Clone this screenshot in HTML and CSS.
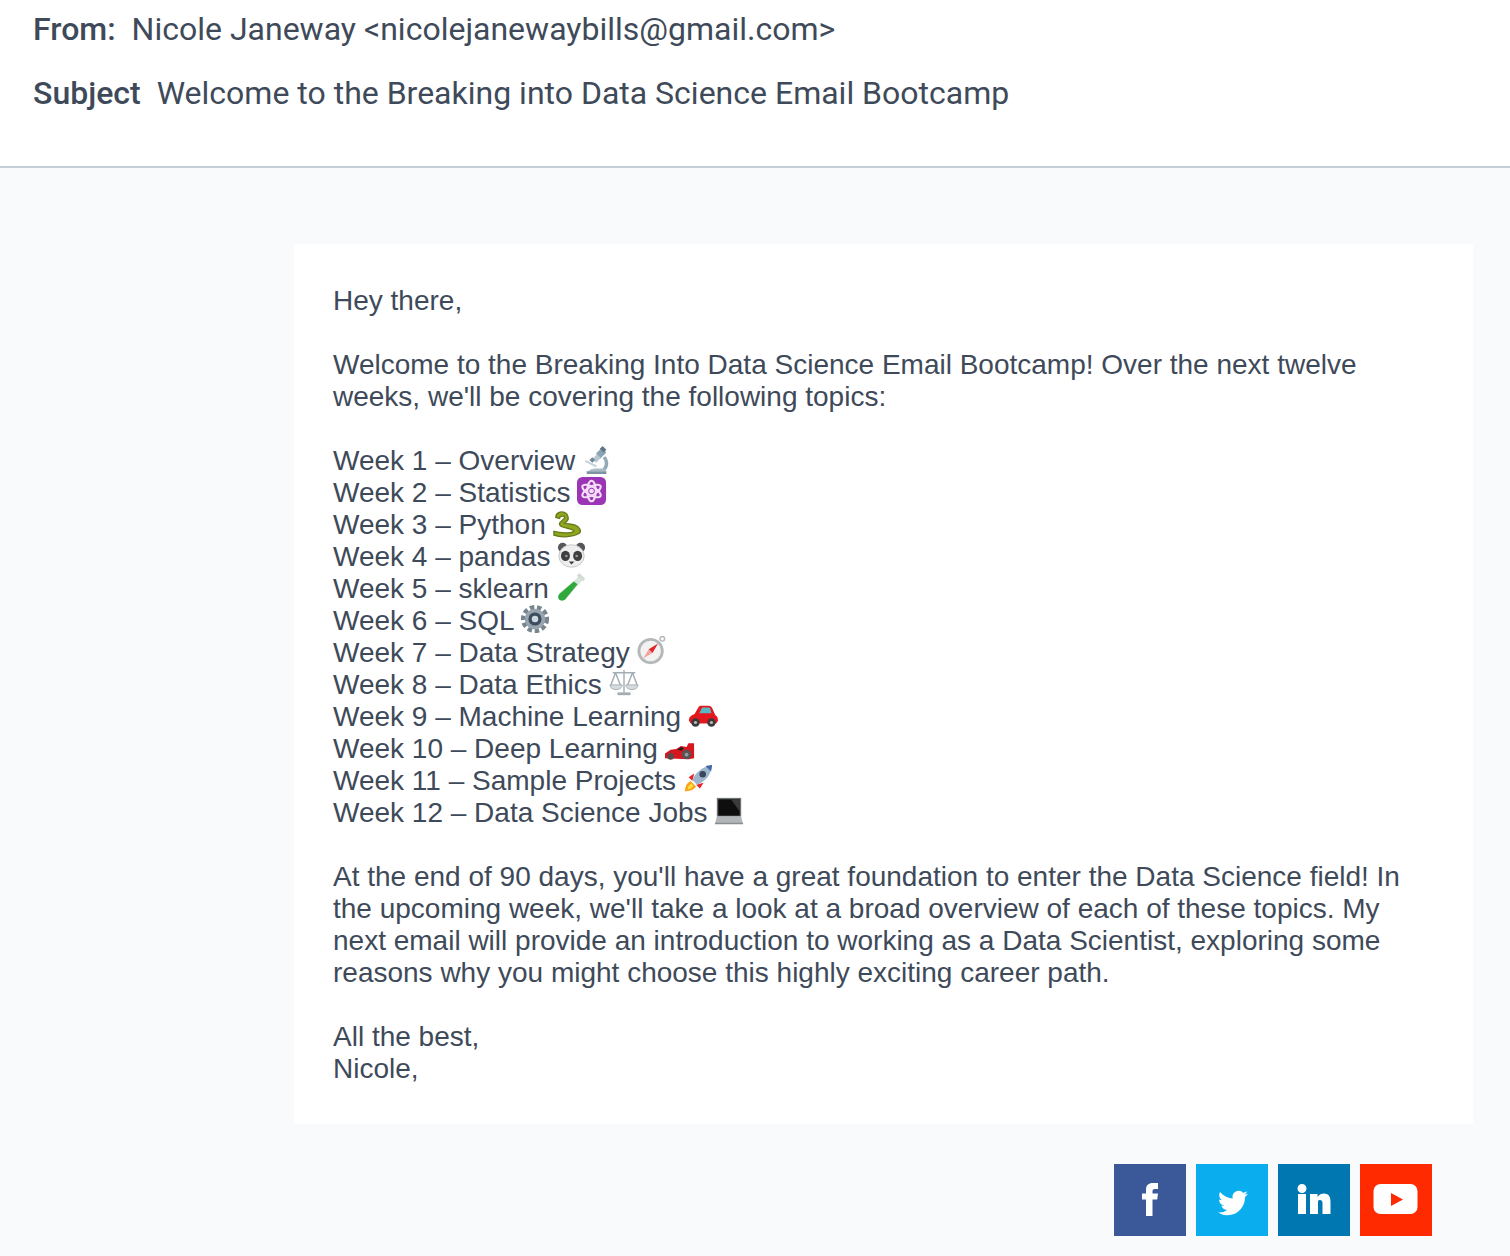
FILE: index.html
```html
<!DOCTYPE html>
<html lang="en">
<head>
<meta charset="utf-8">
<title>Welcome to the Breaking into Data Science Email Bootcamp</title>
<link rel="stylesheet" href="styles.css">
</head>
<body>
<header class="head">
  <p class="head-row"><b class="head-label">From:</b><span>Nicole Janeway &lt;nicolejanewaybills@gmail.com&gt;</span></p>
  <p class="head-row"><b class="head-label">Subject</b><span>Welcome to the Breaking into Data Science Email Bootcamp</span></p>
</header>
<main class="stage">
  <article class="card">
    <p class="para">Hey there,</p>
    <p class="para">Welcome to the Breaking Into Data Science Email Bootcamp! Over the next twelve weeks, we'll be covering the following topics:</p>
    <ul class="weeks">
      <li>Week 1 – Overview <svg class="emo" viewBox="0 -2 32 32"><path d="M22 24c3-3 3-8 0-11l3-2c4 4 4 12 0 15z" fill="#93aab8"/><path d="M5 30h21v-3H5z" fill="#7f929f"/><path d="M7 27c1-2 5-3 8-3h9l2 3z" fill="#a9bcc6"/><path d="M15 8l6-6 5 5-7 7z" fill="#8ba3b2"/><path d="M19 3l3-3 4 4-3 3z" fill="#5f7888"/><path d="M11 14l5-5 4 4-5 5z" fill="#b7c8d1"/><path d="M4 15l12 6-1 2-12-6z" fill="#c7d3d9"/><path d="M8 15l3-3 3 3-3 3z" fill="#6f8795"/></svg></li>
      <li>Week 2 – Statistics <svg class="emo" viewBox="0 0 32 32"><rect x="0" y="1" width="31" height="30" rx="6" fill="#9a35b5"/><g fill="none" stroke="#f6dff9" stroke-width="2.200"><ellipse cx="15.500" cy="16" rx="4.500" ry="11"/><ellipse cx="15.500" cy="16" rx="4.500" ry="11" transform="rotate(60 15.500 16)"/><ellipse cx="15.500" cy="16" rx="4.500" ry="11" transform="rotate(-60 15.500 16)"/></g><circle cx="15.500" cy="16" r="2.500" fill="#f6dff9"/></svg></li>
      <li>Week 3 – Python <svg class="emo" viewBox="0 -1 32 32"><path d="M1 28c8 3 21 2 27-2 3-3 0-7-5-9-4-1-9-1-11-2 3-1 5-4 4-7-1-4-6-6-10-4-2 1-3 3-3 5l4 1c0-2 3-3 5-2 2 2-3 4-5 7-1 4 5 5 10 6 3 1 6 2 5 3-3 2-14 2-21 0z" fill="#8fa61f" stroke="#66791a" stroke-width="1.400"/></svg></li>
      <li>Week 4 – pandas <svg class="emo" viewBox="0 -1 32 32"><circle cx="6" cy="7" r="5" fill="#55555a"/><circle cx="25" cy="7" r="5" fill="#55555a"/><ellipse cx="15.500" cy="16" rx="13.500" ry="12" fill="#eeeeee" stroke="#c4c4c4"/><ellipse cx="9" cy="16" rx="4.800" ry="5.500" fill="#3f3f42"/><ellipse cx="22" cy="16" rx="4.800" ry="5.500" fill="#3f3f42"/><circle cx="10" cy="16" r="1.400" fill="#999"/><circle cx="21" cy="16" r="1.400" fill="#999"/><path d="M12.500 22h6l-3 3z" fill="#3f3f42"/></svg></li>
      <li>Week 5 – sklearn <svg class="emo" viewBox="0 0 32 32"><path d="M24 5l4 4L10 29c-2 2-5 2-7 0-1-2-1-4 1-6z" fill="#d7e6da"/><path d="M19 10l4 3L10 29c-2 2-5 2-7 0-1-2-1-4 1-6z" fill="#2fa83c"/><path d="M22 4l7 6 2-3-6-6z" fill="#d3dbd7"/></svg></li>
      <li>Week 6 – SQL <svg class="emo" viewBox="0 0 32 32"><circle cx="16" cy="16" r="12" fill="none" stroke="#77858f" stroke-width="6" stroke-dasharray="4.500 2.780"/><circle cx="16" cy="16" r="11" fill="#98a5ae"/><circle cx="16" cy="16" r="7" fill="#3d4d60"/><circle cx="16" cy="16" r="3.500" fill="#cfd8de"/></svg></li>
      <li>Week 7 – Data Strategy <svg class="emo" viewBox="0 0 32 32"><circle cx="14.500" cy="16" r="14" fill="#b5b8ba"/><circle cx="14.500" cy="16" r="11" fill="#f2f2f2"/><circle cx="27" cy="3" r="2.500" fill="none" stroke="#b5b8ba" stroke-width="1.500"/><path d="M22.500 8l-6 10-4-4z" fill="#e0262b"/><path d="M6.500 24l6-10 4 4z" fill="#f3a6a0"/></svg></li>
      <li>Week 8 – Data Ethics <svg class="emo" viewBox="0 0 32 32"><g fill="none" stroke="#a3adb3" stroke-width="1.500"><path d="M4 5h24M16 2v24M7 5L2 18M7 5l5 13M25 5l-5 13M25 5l5 13"/></g><path d="M1 18h13c0 3-3 5-6.500 5S1 21 1 18zM18 18h13c0 3-3 5-6.500 5S18 21 18 18z" fill="#d6dbdf" stroke="#a3adb3"/><path d="M9 26h14v3H9z" fill="#a3adb3"/></svg></li>
      <li>Week 9 – Machine Learning <svg class="emo" viewBox="0 0 32 32"><path d="M1 22c0-4 3-6 6-7l4-7c1-2 2-2 4-2h7c2 0 3 1 4 3l3 7c2 1 3 3 3 6l-2 3H3z" fill="#e3171d"/><path d="M12 14l3-6h7c1 0 2 1 2 2l1 4z" fill="#58b7c2"/><circle cx="8" cy="24" r="4.500" fill="#3b3b3b"/><circle cx="25" cy="24" r="4.500" fill="#3b3b3b"/><circle cx="8" cy="24" r="1.700" fill="#bbb"/><circle cx="25" cy="24" r="1.700" fill="#bbb"/></svg></li>
      <li>Week 10 – Deep Learning <svg class="emo" viewBox="0 0 32 32"><path d="M0 28v-5l6-4 6-1 5-3 6 1 2-4h6v16l-6 1z" fill="#d6171f"/><circle cx="6" cy="26" r="3.500" fill="#5a4a4a"/><circle cx="23" cy="24" r="5" fill="#555"/><circle cx="23" cy="24" r="2" fill="#999"/><path d="M13 19l4-3 3 1-2 3z" fill="#222"/></svg></li>
      <li>Week 11 – Sample Projects <svg class="emo" viewBox="0 0 32 32"><path d="M2 29c0-5 2-9 6-11l6 6c-3 4-7 5-12 5z" fill="#f9a51a"/><path d="M5 27c0-3 2-5 4-6l2 2c-1 2-3 4-6 4z" fill="#fde047"/><path d="M6 14l6-4-2 8zM18 26l4-6-8 2z" fill="#e5262a"/><path d="M10 17C14 8 21 3 31 1c-1 10-6 17-16 21z" fill="#9db6cc"/><path d="M24 2c2 0 5-1 7-1 0 2-1 5-1 7z" fill="#4665a8"/><circle cx="21" cy="11" r="3.500" fill="#39465c"/></svg></li>
      <li>Week 12 – Data Science Jobs <svg class="emo" viewBox="0 -1 32 32"><path d="M3 1h26v20H3z" fill="#6e7275"/><path d="M4.500 2.500h23V20h-23z" fill="#0e0e0e"/><path d="M18 2.500h9.500v13z" fill="#3b3b3b"/><path d="M3 21h26l2 8H1z" fill="#b3b6b8"/><path d="M1 27.500h30V29H1z" fill="#8b8e90"/></svg></li>
    </ul>
    <p class="para">At the end of 90 days, you'll have a great foundation to enter the Data Science field! In the upcoming week, we'll take a look at a broad overview of each of these topics. My next email will provide an introduction to working as a Data Scientist, exploring some reasons why you might choose this highly exciting career path.</p>
    <p class="para">All the best,<br>Nicole,</p>
  </article>
  <nav class="social">
    <a class="tile tile-fb"><svg viewBox="0 0 72 72"><path d="M32 52V35.500h-4v-6h4V26c0-5 2.500-7 7-7h5v6h-3c-2 0-2.500.800-2.500 2.500v2h5.500l-.8 6h-4.700V52z" fill="#fff"/></svg></a>
    <a class="tile tile-tw"><svg viewBox="0 0 72 72"><g transform="translate(22 24) scale(1.250)"><path d="M23.950 4.570a10 10 0 0 1-2.820.78 4.960 4.960 0 0 0 2.160-2.720c-.95.550-2 .96-3.130 1.190a4.920 4.920 0 0 0-8.380 4.480C7.690 8.100 4.070 6.130 1.640 3.160a4.820 4.820 0 0 0-.67 2.480c0 1.710.87 3.210 2.190 4.100a4.900 4.900 0 0 1-2.230-.62v.06a4.920 4.920 0 0 0 3.950 4.830 4.940 4.940 0 0 1-2.210.08 4.940 4.940 0 0 0 4.600 3.420A9.870 9.870 0 0 1 0 19.540a14 14 0 0 0 7.560 2.210c9.050 0 14-7.500 14-13.980 0-.21 0-.42-.02-.63a9.940 9.940 0 0 0 2.460-2.550z" fill="#fff"/></g></svg></a>
    <a class="tile tile-in"><svg viewBox="0 0 72 72"><path d="M20 30h8v20h-8zM24 20a4.500 4.500 0 1 1 0 9 4.500 4.500 0 0 1 0-9zM32 30h7.500v3c1.500-2.500 4-3.500 6.500-3.500 5 0 6.500 3.500 6.500 8.500v12h-8V39.500c0-2.500-.8-3.500-2.800-3.500S40 37.500 40 40v10h-8z" fill="#fff"/></svg></a>
    <a class="tile tile-yt"><svg viewBox="0 0 72 72"><rect x="13.500" y="20" width="44" height="30" rx="7" fill="#fff"/><path d="M31 29l12 6.500-12 6.500z" fill="#ff2a00"/></svg></a>
  </nav>
</main>
</body>
</html>
```
FILE: styles.css
```css
html, body {
  margin: 0;
  padding: 0;
}
body {
  background: #f9fafb;
  color: #3e4a59;
  font-family: "Liberation Sans", Arial, sans-serif;
}
.head {
  box-sizing: border-box;
  height: 168px;
  padding-top: 8px;
  background: #fff;
  border-bottom: 2px solid #c3ced8;
  font-family: Roboto, sans-serif;
  font-size: 32px;
}
.head-row {
  display: flex;
  gap: 16px;
  height: 42px;
  margin: 0 0 22px 33px;
  line-height: 42px;
}
.head-label {
  font-weight: 500;
}
.stage {
  padding: 76px 37px 20px 294px;
}
.card {
  padding: 41px 39px 39px;
  background: #fff;
  font-size: 28px;
  line-height: 32px;
}
.para {
  margin: 0 0 32px;
}
.para:last-child {
  margin-bottom: 0;
}
.weeks {
  margin: 0 0 32px;
  padding: 0;
  list-style: none;
}
.emo {
  width: 30px;
  height: 30px;
  margin: -3px 0 -3px -1px;
  vertical-align: -1px;
  filter: blur(.3px);
}
.social {
  display: flex;
  justify-content: flex-end;
  gap: 10px;
  margin: 40px 41px 0 0;
}
.tile {
  display: block;
  width: 72px;
  height: 72px;
}
.tile svg {
  display: block;
  width: 72px;
  height: 72px;
  filter: blur(.4px);
}
.tile-fb { background: #3b5998; }
.tile-tw { background: #0aaeef; }
.tile-in { background: #0077b0; }
.tile-yt { background: #ff2a00; }
```
